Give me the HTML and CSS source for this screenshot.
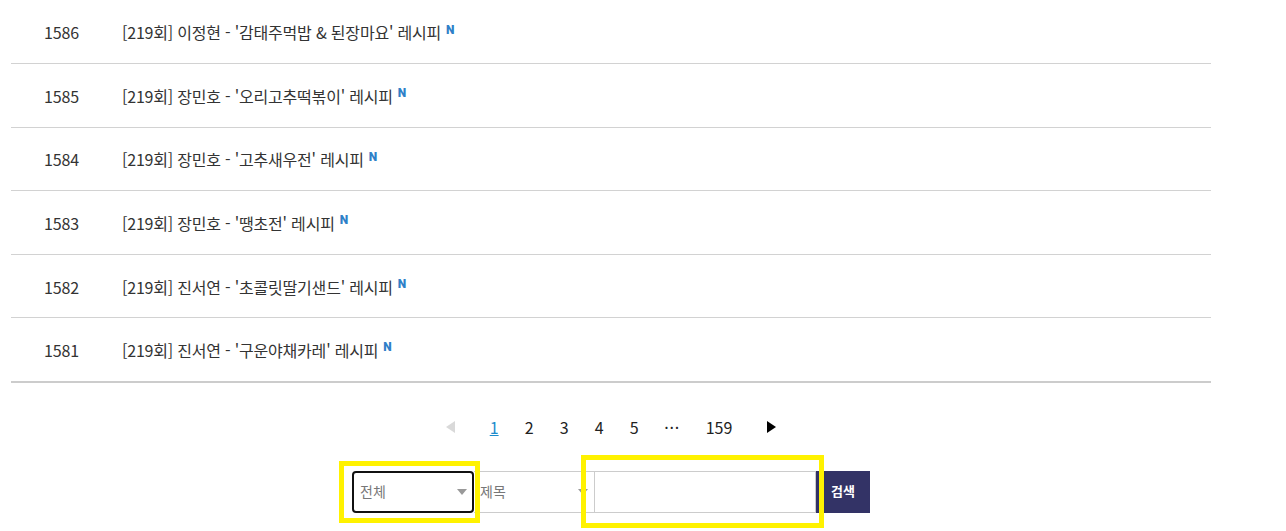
FILE: index.html
```html
<!DOCTYPE html>
<html lang="ko">
<head>
    <meta charset="UTF-8">
    <meta name="viewport" content="width=device-width, initial-scale=1.0">
    <title>레시피 게시판</title>
    <link rel="stylesheet" href="styles.css">
</head>
<body>
    <div class="board">
        <ul class="board-list">
            <li class="board-row"><span class="num">1586</span><a href="#" class="title">[219회] 이정현 - '감태주먹밥 &amp; 된장마요' 레시피</a><span class="new">N</span></li>
            <li class="board-row"><span class="num">1585</span><a href="#" class="title">[219회] 장민호 - '오리고추떡볶이' 레시피</a><span class="new">N</span></li>
            <li class="board-row"><span class="num">1584</span><a href="#" class="title">[219회] 장민호 - '고추새우전' 레시피</a><span class="new">N</span></li>
            <li class="board-row"><span class="num">1583</span><a href="#" class="title">[219회] 장민호 - '땡초전' 레시피</a><span class="new">N</span></li>
            <li class="board-row"><span class="num">1582</span><a href="#" class="title">[219회] 진서연 - '초콜릿딸기샌드' 레시피</a><span class="new">N</span></li>
            <li class="board-row"><span class="num">1581</span><a href="#" class="title">[219회] 진서연 - '구운야채카레' 레시피</a><span class="new">N</span></li>
        </ul>

        <div class="paging">
            <span class="arrow arrow-prev"></span>
            <a href="#" class="page current">1</a>
            <a href="#" class="page">2</a>
            <a href="#" class="page">3</a>
            <a href="#" class="page">4</a>
            <a href="#" class="page">5</a>
            <span class="page dots">···</span>
            <a href="#" class="page last">159</a>
            <span class="arrow arrow-next"></span>
        </div>

        <div class="search">
            <div class="select select-focus">
                <span>전체</span>
                <i class="caret"></i>
            </div>
            <div class="select select-plain">
                <span>제목</span>
                <i class="caret"></i>
            </div>
            <input type="text" class="search-input">
            <button class="search-button">검색</button>
            <!-- yellow highlight boxes -->
            <div class="mark mark-select"></div>
            <div class="mark mark-input"></div>
        </div>
    </div>
</body>
</html>
```

FILE: styles.css
```css
/* General Styles */
body {
    font-family: "Noto Sans CJK KR", "Noto Sans", sans-serif;
    font-size: 16px;
    color: #333;
    background-color: #fff;
    margin: 0;
    padding: 0;
}

a {
    color: inherit;
    text-decoration: none;
}

.board {
    width: 1200px;
    margin-left: 11px;
    padding-bottom: 18px;
}

/* List */
.board-list {
    list-style: none;
    margin: 0.5px 0 0;
    padding: 0;
    border-bottom: 1px solid #ccc;
}

.board-row {
    display: flex;
    align-items: center;
    box-sizing: border-box;
    height: 63.6px;
    padding-top: 1px;
    border-bottom: 1px solid #d2d2d2;
}

.board-row:last-child {
    border-bottom: 1px solid #ccc;
}

.num {
    width: 112px;
    padding-left: 33px;
    box-sizing: border-box;
    letter-spacing: -0.1px;
}

.title {
    margin-left: -1px;
    letter-spacing: -0.2px;
    line-height: 24px;
}

.new {
    align-self: flex-start;
    margin-top: 22px;
    margin-left: 5px;
    font-family: Roboto, "Liberation Sans", sans-serif;
    font-size: 12px;
    font-weight: 900;
    line-height: 13px;
    color: #2f80c8;
}

/* Paging */
.paging {
    display: flex;
    align-items: center;
    justify-content: center;
    height: 24px;
    margin-top: 32px;
    color: #222;
}

.page {
    margin: 0 9px;
    min-width: 17px;
    text-align: center;
}

.current {
    color: #1b8ccc;
    text-decoration: underline;
}

.dots {
    margin: 0 11px 0 12px;
    letter-spacing: 0.8px;
}

.last {
    margin: 0 9px 0 14px;
}

.arrow {
    width: 0;
    height: 0;
    border-top: 6px solid transparent;
    border-bottom: 6px solid transparent;
}

.arrow-prev {
    border-right: 9px solid #d9d9d9;
    margin-right: 22px;
}

.arrow-next {
    border-left: 9px solid #000;
    margin-left: 26px;
}

/* Search */
.search {
    position: relative;
    display: flex;
    height: 42px;
    margin-top: 32px;
    margin-left: 341px;
    font-size: 14px;
    color: #777;
}

.select {
    position: relative;
    display: flex;
    align-items: center;
    box-sizing: border-box;
    height: 42px;
    padding-bottom: 3px;
    background-color: #fff;
}

.select-focus {
    width: 122px;
    padding-left: 6px;
    border: 2px solid #111;
    border-radius: 4px;
}

.select-plain {
    width: 120px;
    padding-left: 6px;
    border-top: 1px solid #ccc;
    border-bottom: 1px solid #ccc;
}

.caret {
    position: absolute;
    right: 5px;
    top: 16px;
    width: 0;
    height: 0;
    border-left: 5px solid transparent;
    border-right: 5px solid transparent;
    border-top: 6px solid #999;
}

.select-plain .caret {
    right: 6px;
    top: 17px;
}

.search-input {
    width: 222px;
    height: 42px;
    box-sizing: border-box;
    padding: 0 8px;
    border: 1px solid #ccc;
    outline: none;
}

.search-button {
    width: 54px;
    height: 42px;
    padding: 0 0 3px;
    border: none;
    background-color: #333366;
    color: #fff;
    font-family: inherit;
    font-size: 13px;
    font-weight: bold;
}

/* Yellow boxes drawn over the form */
.mark {
    position: absolute;
    box-sizing: border-box;
    border: 5px solid #fff200;
    pointer-events: none;
}

.mark-select {
    left: -13px;
    top: -10px;
    width: 141px;
    height: 62px;
}

.mark-input {
    left: 229px;
    top: -16px;
    width: 243px;
    height: 73px;
}
```
